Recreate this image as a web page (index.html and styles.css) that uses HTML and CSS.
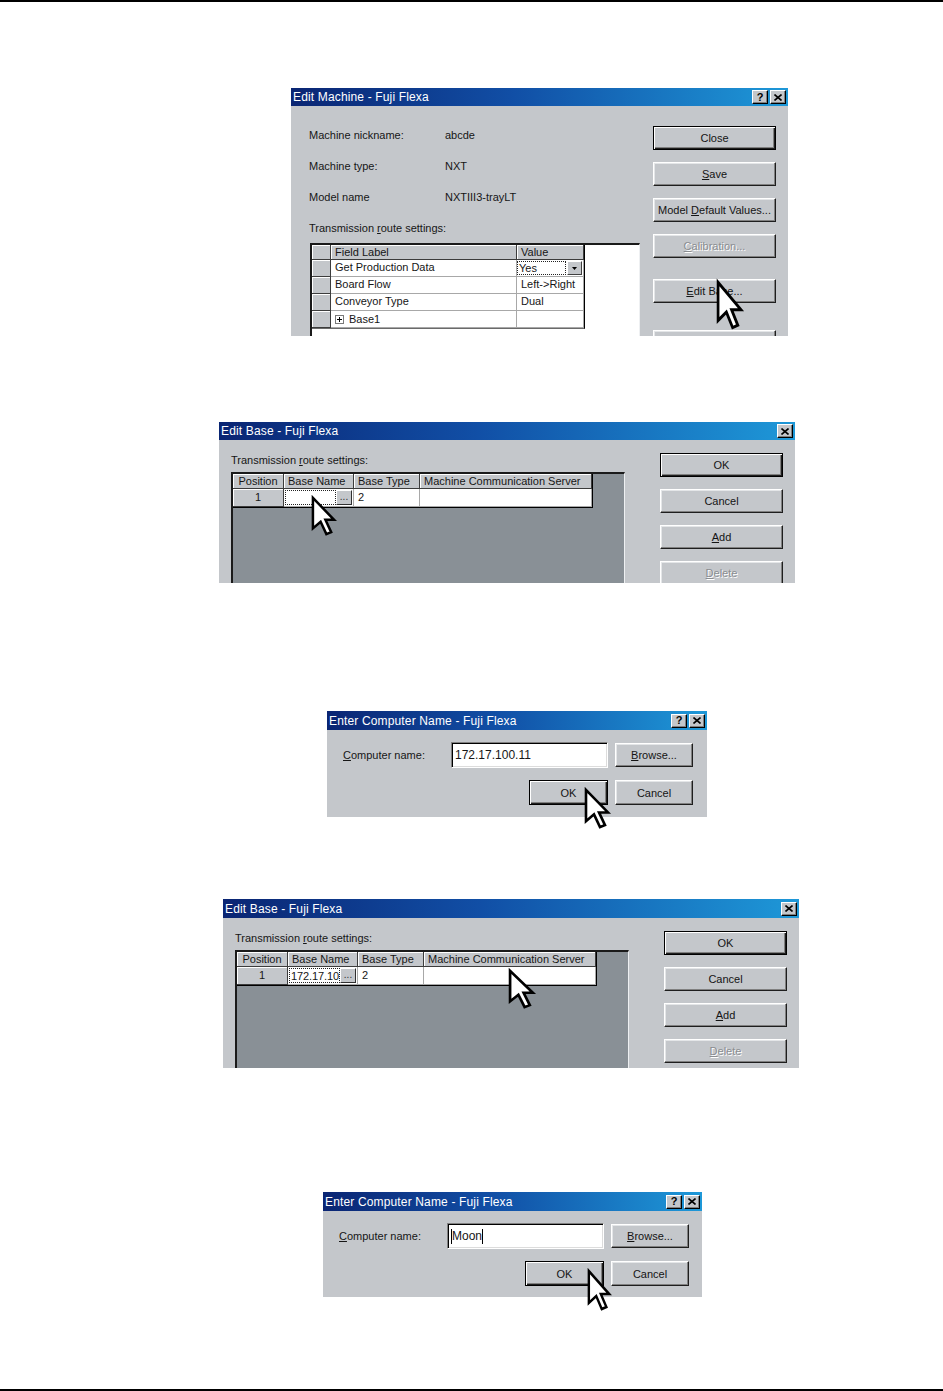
FILE: index.html
```html
<!DOCTYPE html>
<html>
<head>
<meta charset="utf-8">
<title>Fuji Flexa dialogs</title>
<link rel="stylesheet" href="styles.css">
</head>
<body>
<div class="page">
  <div class="rule"></div>

  <!-- Edit Machine -->
  <div class="shot shot1">
    <div class="dialog">
      <div class="titlebar">
        <span class="ttl">Edit Machine - Fuji Flexa</span>
        <span class="tbtns">
          <span class="tbtn">?</span>
          <span class="tbtn"><svg width="8" height="7" viewBox="0 0 8 7"><path d="M0.5 0.5 L7.5 6.5 M7.5 0.5 L0.5 6.5" stroke="#000" stroke-width="1.6"/></svg></span>
        </span>
      </div>
      <div class="body body-machine">
        <div class="machine-left">
          <div class="info"><span class="info-lbl">Machine nickname:</span><span>abcde</span></div>
          <div class="info"><span class="info-lbl">Machine type:</span><span>NXT</span></div>
          <div class="info"><span class="info-lbl">Model name</span><span>NXTIII3-trayLT</span></div>
          <div class="caption caption-machine">Transmission <u>r</u>oute settings:</div>
          <div class="frame frame-white">
            <div class="pgrid">
              <div class="hc"></div>
              <div class="hc txt">Field Label</div>
              <div class="hc txt">Value</div>

              <div class="rh"></div>
              <div class="dc txt">Get Production Data</div>
              <div class="dc combo"><span class="focus">Yes</span><span class="ddbtn"><svg width="5" height="3" viewBox="0 0 5 3"><path d="M0 0 H5 L2.5 3 Z" fill="#000"/></svg></span></div>

              <div class="rh"></div>
              <div class="dc txt">Board Flow</div>
              <div class="dc txt">Left-&gt;Right</div>

              <div class="rh"></div>
              <div class="dc txt">Conveyor Type</div>
              <div class="dc txt">Dual</div>

              <div class="rh"></div>
              <div class="dc txt tree"><svg class="plus" width="9" height="9" viewBox="0 0 9 9"><rect x="0.5" y="0.5" width="8" height="8" fill="#fff" stroke="#7a7a7a"/><path d="M2 4.5 H7 M4.5 2 V7" stroke="#000"/></svg>Base1</div>
              <div class="dc"></div>
            </div>
          </div>
        </div>
        <div class="btn-col btn-col-machine">
          <div class="btn default">Close</div>
          <div class="btn"><span><u>S</u>ave</span></div>
          <div class="btn"><span>Model <u>D</u>efault Values...</span></div>
          <div class="btn disabled"><span><u>C</u>alibration...</span></div>
          <div class="btn btn-editbase"><span><u>E</u>dit Base...</span></div>
          <div class="btn btn-last"></div>
        </div>
      </div>
    </div>
    <svg class="cursor cur1" viewBox="-1 -1 13 21" preserveAspectRatio="none"><path d="M0 0 L0 16 L4 12.5 L7 19 L9.5 18 L6.5 11.5 L11 11.5 Z" fill="#fff" stroke="#000" stroke-width="1.3" stroke-linejoin="miter"/></svg>
  </div>

  <!-- Edit Base (empty) -->
  <div class="shot shot2">
    <div class="dialog">
      <div class="titlebar">
        <span class="ttl">Edit Base - Fuji Flexa</span>
        <span class="tbtns">
          <span class="tbtn"><svg width="8" height="7" viewBox="0 0 8 7"><path d="M0.5 0.5 L7.5 6.5 M7.5 0.5 L0.5 6.5" stroke="#000" stroke-width="1.6"/></svg></span>
        </span>
      </div>
      <div class="body body-base">
        <div class="base-left">
          <div class="caption caption-base">Transmission <u>r</u>oute settings:</div>
          <div class="frame frame-gray">
            <div class="bgrid">
              <div class="hc ctr">Position</div>
              <div class="hc txt">Base Name</div>
              <div class="hc txt">Base Type</div>
              <div class="hc txt">Machine Communication Server</div>

              <div class="rh ctr">1</div>
              <div class="dc namecell"><span class="focus"></span><span class="ellip">...</span></div>
              <div class="dc txt">2</div>
              <div class="dc"></div>
            </div>
          </div>
        </div>
        <div class="btn-col btn-col-base">
          <div class="btn default">OK</div>
          <div class="btn">Cancel</div>
          <div class="btn"><span><u>A</u>dd</span></div>
          <div class="btn disabled"><span><u>D</u>elete</span></div>
        </div>
      </div>
    </div>
    <svg class="cursor cur2" viewBox="-1 -1 13 21" preserveAspectRatio="none"><path d="M0 0 L0 16 L4 12.5 L7 19 L9.5 18 L6.5 11.5 L11 11.5 Z" fill="#fff" stroke="#000" stroke-width="1.3" stroke-linejoin="miter"/></svg>
  </div>

  <!-- Enter Computer Name (IP) -->
  <div class="shot shot3">
    <div class="dialog">
      <div class="titlebar tall">
        <span class="ttl">Enter Computer Name - Fuji Flexa</span>
        <span class="tbtns">
          <span class="tbtn">?</span>
          <span class="tbtn"><svg width="8" height="7" viewBox="0 0 8 7"><path d="M0.5 0.5 L7.5 6.5 M7.5 0.5 L0.5 6.5" stroke="#000" stroke-width="1.6"/></svg></span>
        </span>
      </div>
      <div class="body body-ecn">
        <div class="ecn-lbl"><u>C</u>omputer name:</div>
        <div class="input">172.17.100.11</div>
        <div class="btn btn-small"><span><u>B</u>rowse...</span></div>
        <div class="btn default btn-ok">OK</div>
        <div class="btn btn-small">Cancel</div>
      </div>
    </div>
    <svg class="cursor cur3" viewBox="-1 -1 13 21" preserveAspectRatio="none"><path d="M0 0 L0 16 L4 12.5 L7 19 L9.5 18 L6.5 11.5 L11 11.5 Z" fill="#fff" stroke="#000" stroke-width="1.3" stroke-linejoin="miter"/></svg>
  </div>

  <!-- Edit Base (filled) -->
  <div class="shot shot4">
    <div class="dialog">
      <div class="titlebar tall">
        <span class="ttl">Edit Base - Fuji Flexa</span>
        <span class="tbtns">
          <span class="tbtn"><svg width="8" height="7" viewBox="0 0 8 7"><path d="M0.5 0.5 L7.5 6.5 M7.5 0.5 L0.5 6.5" stroke="#000" stroke-width="1.6"/></svg></span>
        </span>
      </div>
      <div class="body body-base">
        <div class="base-left">
          <div class="caption caption-base">Transmission <u>r</u>oute settings:</div>
          <div class="frame frame-gray">
            <div class="bgrid">
              <div class="hc ctr">Position</div>
              <div class="hc txt">Base Name</div>
              <div class="hc txt">Base Type</div>
              <div class="hc txt">Machine Communication Server</div>

              <div class="rh ctr">1</div>
              <div class="dc namecell"><span class="focus clip">172.17.10</span><span class="ellip">...</span></div>
              <div class="dc txt">2</div>
              <div class="dc"></div>
            </div>
          </div>
        </div>
        <div class="btn-col btn-col-base">
          <div class="btn default">OK</div>
          <div class="btn">Cancel</div>
          <div class="btn"><span><u>A</u>dd</span></div>
          <div class="btn disabled"><span><u>D</u>elete</span></div>
        </div>
      </div>
    </div>
    <svg class="cursor cur4" viewBox="-1 -1 13 21" preserveAspectRatio="none"><path d="M0 0 L0 16 L4 12.5 L7 19 L9.5 18 L6.5 11.5 L11 11.5 Z" fill="#fff" stroke="#000" stroke-width="1.3" stroke-linejoin="miter"/></svg>
  </div>

  <!-- Enter Computer Name (Moon) -->
  <div class="shot shot5">
    <div class="dialog">
      <div class="titlebar tall">
        <span class="ttl">Enter Computer Name - Fuji Flexa</span>
        <span class="tbtns">
          <span class="tbtn">?</span>
          <span class="tbtn"><svg width="8" height="7" viewBox="0 0 8 7"><path d="M0.5 0.5 L7.5 6.5 M7.5 0.5 L0.5 6.5" stroke="#000" stroke-width="1.6"/></svg></span>
        </span>
      </div>
      <div class="body body-ecn">
        <div class="ecn-lbl"><u>C</u>omputer name:</div>
        <div class="input"><span class="caret">Moon</span></div>
        <div class="btn btn-small"><span><u>B</u>rowse...</span></div>
        <div class="btn default btn-ok">OK</div>
        <div class="btn btn-small">Cancel</div>
      </div>
    </div>
    <svg class="cursor cur5" viewBox="-1 -1 13 21" preserveAspectRatio="none"><path d="M0 0 L0 16 L4 12.5 L7 19 L9.5 18 L6.5 11.5 L11 11.5 Z" fill="#fff" stroke="#000" stroke-width="1.3" stroke-linejoin="miter"/></svg>
  </div>

  <div class="rule rule-bottom"></div>
</div>
</body>
</html>
```

FILE: styles.css
```css
* { box-sizing: border-box; }
html, body { margin: 0; padding: 0; background: #fff; }
body {
  font-family: "Liberation Sans", Arial, sans-serif;
  font-size: 11px;
  color: #161616;
}
.page { width: 943px; height: 1391px; overflow: hidden; }
.rule { height: 2px; background: #000; }
.rule-bottom { margin-top: 92px; }

/* screenshot placements */
.shot { position: relative; }
.shot1 { margin: 86px 0 0 291px; width: 497px; height: 248px; }
.shot2 { margin: 86px 0 0 219px; width: 576px; height: 161px; }
.shot3 { margin: 128px 0 0 327px; width: 380px; height: 106px; }
.shot4 { margin: 82px 0 0 223px; width: 576px; height: 169px; }
.shot5 { margin: 124px 0 0 323px; width: 379px; height: 105px; }

.dialog {
  width: 100%;
  height: 100%;
  background: #c4c7cb;
  overflow: hidden;
  display: flex;
  flex-direction: column;
}

/* title bar */
.titlebar {
  flex: none;
  height: 18px;
  background: linear-gradient(90deg, #0a2573 0%, #114fa6 45%, #1e98d8 100%);
  color: #fff;
  display: flex;
  align-items: center;
  justify-content: space-between;
  padding: 0 2px 0 2px;
  font-size: 12px;
  letter-spacing: 0.15px;
}
.titlebar.tall { height: 19px; }
.ttl { white-space: nowrap; }
.tbtns { display: flex; gap: 2px; }
.tbtn {
  width: 16px;
  height: 14px;
  background: #c4c7cb;
  border: 1px solid;
  border-color: #fff #000 #000 #fff;
  box-shadow: inset -1px -1px #808080;
  display: flex;
  align-items: center;
  justify-content: center;
  color: #000;
  font-weight: bold;
  font-size: 11px;
  letter-spacing: 0;
  line-height: 1;
}

/* buttons */
.btn {
  width: 123px;
  height: 24px;
  flex: none;
  background: #c4c7cb;
  border: 1px solid;
  border-color: #fff #1e1e1e #1e1e1e #fff;
  box-shadow: inset -1px -1px #808080, inset 1px 1px #e4e6e8;
  display: flex;
  align-items: center;
  justify-content: center;
  color: #141414;
  white-space: nowrap;
}
.btn.default {
  border-color: #000;
  box-shadow: inset 1px 1px #fff, inset -1px -1px #1e1e1e, inset -2px -2px #808080;
}
.btn.disabled { color: #8a8d91; text-shadow: 1px 1px #fff; }

.btn-col { display: flex; flex-direction: column; gap: 12px; }

/* Edit Machine body */
.body-machine {
  display: flex;
  padding: 20px 0 0 18px;
  gap: 13px;
}
.machine-left { width: 331px; margin-top: 2px; flex: none; }
.info { display: flex; height: 14px; line-height: 14px; margin-bottom: 17px; }
.info-lbl { width: 136px; flex: none; }
.caption { line-height: 14px; height: 14px; white-space: nowrap; }
.caption-machine { margin-bottom: 8px; }
.btn-editbase { margin-top: 9px; }
.btn-last { margin-top: 15px; }

/* sunken frames */
.frame {
  border-style: solid;
  border-width: 2px 1px 1px 2px;
  border-color: #1a1a1a #eef0f2 #eef0f2 #1a1a1a;
  height: 200px;
}
.frame-white { width: 330px; margin-left: 1px; background: #fff; }
.frame-gray { width: 394px; background: #899096; }

/* grid cells */
.hc, .rh {
  background: #c4c7cb;
  border-right: 1px solid #3c3c3c;
  border-bottom: 1px solid #3c3c3c;
  box-shadow: inset 1px 1px #fff;
  line-height: 14px;
  white-space: nowrap;
  overflow: hidden;
}
.dc {
  background: #fff;
  border-right: 1px solid #a8a8a8;
  border-bottom: 1px solid #a8a8a8;
  line-height: 15px;
  white-space: nowrap;
  overflow: hidden;
}
.txt { padding-left: 4px; }
.ctr { text-align: center; }

.pgrid {
  display: grid;
  grid-template-columns: 19px 186px 67px;
  grid-template-rows: 15px repeat(4, 17px);
  width: 273px;
  border-right: 1px solid #000;
  border-bottom: 1px solid #6a6a6a;
}
.pgrid .hc { line-height: 14px; }
.combo { display: flex; align-items: stretch; padding: 1px 1px 1px 0; }
.focus {
  flex: 1;
  border: 1px dotted #222;
  padding-left: 1px;
  line-height: 13px;
  overflow: hidden;
  white-space: nowrap;
}
.ddbtn {
  width: 15px;
  margin-left: 1px;
  background: #c4c7cb;
  border: 1px solid;
  border-color: #fff #404040 #404040 #fff;
  display: flex;
  align-items: center;
  justify-content: center;
}
.tree { display: flex; align-items: center; gap: 5px; }
.plus { flex: none; }

/* Edit Base body */
.body-base {
  display: flex;
  padding: 13px 0 0 12px;
  gap: 35px;
}
.base-left { width: 394px; flex: none; }
.caption-base { margin-bottom: 5px; }
.bgrid {
  display: grid;
  grid-template-columns: 51px 70px 66px 172px;
  grid-template-rows: 15px 18px;
  width: 360px;
  border-right: 1px solid #000;
  border-bottom: 1px solid #000;
}
.bgrid .rh { line-height: 17px; }
.bgrid .dc { line-height: 17px; }
.namecell { display: flex; padding: 1px; align-items: stretch; }
.namecell .focus { line-height: 14px; font-size: 12px; }
.namecell .clip { padding-left: 1px; font-size: 11px; letter-spacing: -0.1px; }
.ellip {
  width: 16px;
  flex: none;
  background: #c4c7cb;
  border: 1px solid;
  border-color: #fff #303030 #303030 #fff;
  font-size: 10px;
  line-height: 12px;
  text-align: center;
  color: #333;
}

/* Enter Computer Name body */
.body-ecn {
  display: grid;
  grid-template-columns: 101px 157px 78px;
  grid-template-rows: 26px 25px;
  column-gap: 7px;
  row-gap: 12px;
  padding: 12px 14px 0 16px;
}
.ecn-lbl { align-self: center; white-space: nowrap; }
.input {
  background: #fff;
  border: 1px solid;
  border-color: #808080 #fff #fff #808080;
  box-shadow: inset 1px 1px #000, inset -1px -1px #dcdcdc;
  font-size: 12px;
  padding-left: 3px;
  display: flex;
  align-items: center;
  white-space: nowrap;
}
.caret { border-right: 1px solid #000; border-left: 1px solid #000; line-height: 15px; }
.btn-small { width: 78px; align-self: center; }
.btn-ok { grid-column: 2; width: 79px; height: 25px; justify-self: end; }
.body-ecn .btn-ok + .btn-small { height: 25px; }

/* cursors */
.cursor { position: absolute; overflow: visible; }
.cur1 { left: 425px; top: 192px; width: 27px; height: 50px; }
.cur2 { left: 92px; top: 74px; width: 25px; height: 40px; }
.cur3 { left: 257px; top: 77px; width: 26px; height: 41px; }
.cur4 { left: 285px; top: 70px; width: 27px; height: 40px; }
.cur5 { left: 264px; top: 77px; width: 24px; height: 42px; }
```
